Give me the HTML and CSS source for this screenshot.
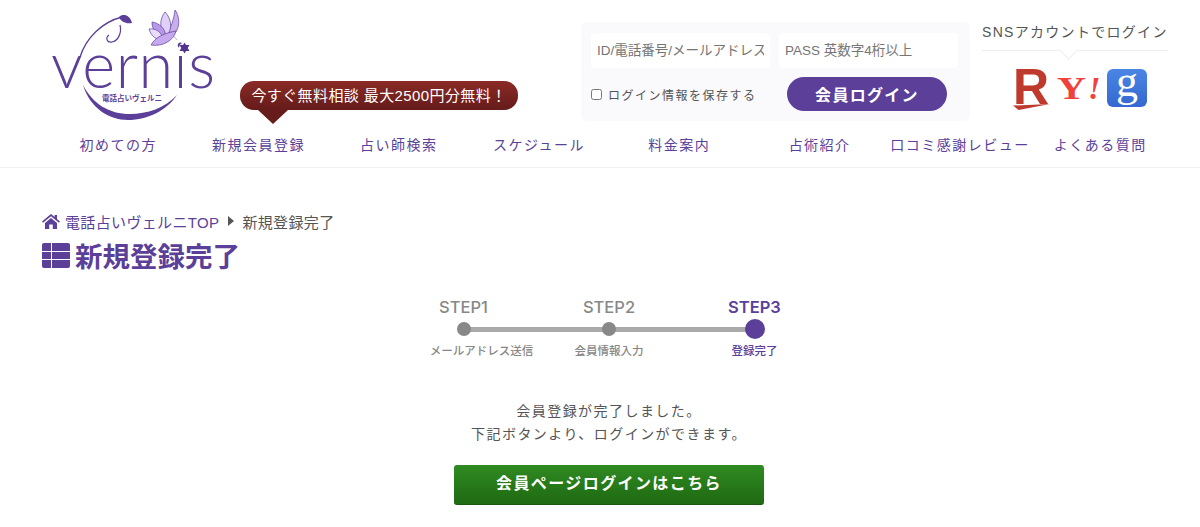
FILE: index.html
```html
<!DOCTYPE html>
<html lang="ja">
<head>
  <meta charset="UTF-8">
  <meta name="viewport" content="width=device-width, initial-scale=1.0">
  <title>新規登録完了 | 電話占いヴェルニ</title>
  <link rel="stylesheet" href="styles.css">
</head>
<body>
  <header class="site-header">
    <div class="header-top">
      <a class="logo" href="#">
        <svg width="174" height="116" viewBox="46 8 174 116">
          <!-- vine -->
          <path d="M80 57C86 38 102 22 122 17" fill="none" stroke="#5b3f99" stroke-width="1.3"/>
          <path d="M120 25C122 33 118 41 112 42C107 43 105 38 109 35" fill="none" stroke="#5b3f99" stroke-width="1.2"/>
          <path d="M119 17C123 13 130 15 132 23C126 24 121 22 119 17Z" fill="#5b3f99"/>
          <!-- lotus -->
          <path d="M166 37C171 28 174 18 175 10C179 15 180 24 177 30C175 34 171 37 166 37Z" fill="#c9aeee" stroke="#5b3f99" stroke-width=".7"/>
          <path d="M164 36C159 28 160 18 165 12C171 18 173 28 167 36Z" fill="#e0d0f7" stroke="#5b3f99" stroke-width=".7"/>
          <path d="M165 38C157 37 152 30 152 22C159 23 167 29 165 38Z" fill="#b898e8" stroke="#5b3f99" stroke-width=".7"/>
          <path d="M163 40C156 40 151 36 149 29C156 28 162 32 163 40Z" fill="#e8dcf9" stroke="#5b3f99" stroke-width=".7"/>
          <path d="M151 45C155 37 165 33 176 31C174 40 163 47 151 45Z" fill="#c6a9ee" stroke="#5b3f99" stroke-width=".7"/>
          <path d="M172 34L177 40" stroke="#a893c9" stroke-width=".7"/>
          <text class="logo-name" x="51" y="88">vernis</text>
          <!-- star -->
          <circle cx="184.5" cy="48" r="5.5" fill="#fff"/>
          <path d="M184.5 42.5L189.5 51H179.5ZM184.5 53.5L179.5 45H189.5Z" fill="#4f3590"/>
          <path d="M83 85C90 108 109 120 128 120C148 120 167 110 177 95C165 108 147 114 130 114C109 114 93 104 83 85Z" fill="#5b3f99"/>
          <text class="logo-sub" x="132" y="101" text-anchor="middle">電話占いヴェルニ</text>
        </svg>
      </a>

      <div class="promo">今すぐ無料相談 最大2500円分無料！</div>

      <form class="login-box">
        <div class="login-row">
          <input class="login-input" type="text" placeholder="ID/電話番号/メールアドレス">
          <input class="login-input" type="password" placeholder="PASS 英数字4桁以上">
        </div>
        <div class="login-row login-row-bottom">
          <label class="remember"><input type="checkbox">ログイン情報を保存する</label>
          <button class="login-btn" type="button">会員ログイン</button>
        </div>
      </form>

      <div class="sns">
        <p class="sns-title">SNSアカウントでログイン</p>
        <div class="sns-icons">
          <a class="sns-rakuten" href="#">R</a>
          <a class="sns-yahoo" href="#"><span class="yahoo-y">Y</span><span class="yahoo-mark">!</span></a>
          <a class="sns-google" href="#">g</a>
        </div>
      </div>
    </div>

    <nav class="global-nav">
      <a href="#">初めての方</a>
      <a href="#">新規会員登録</a>
      <a href="#">占い師検索</a>
      <a href="#">スケジュール</a>
      <a href="#">料金案内</a>
      <a href="#">占術紹介</a>
      <a href="#">口コミ感謝レビュー</a>
      <a href="#">よくある質問</a>
    </nav>
  </header>

  <main class="content">
    <div class="breadcrumb">
      <svg class="icon-home" width="18" height="15" viewBox="0 0 18 15">
        <path d="M9 0L12.6 3V1H15V5L18 7.6L17 8.8L9 2.2L1 8.8L0 7.6ZM3 9L9 4L15 9V15H10.8V10.5H7.2V15H3Z" fill="#5b3f99"/>
      </svg>
      <a href="#">電話占いヴェルニTOP</a>
      <svg class="icon-caret" width="6" height="10" viewBox="0 0 6 10"><path d="M0 0L6 5L0 10Z" fill="#555"/></svg>
      <span>新規登録完了</span>
    </div>

    <h1 class="page-title">
      <svg width="28" height="25" viewBox="0 0 28 25">
        <path d="M2 0H9V8H0V2Q0 0 2 0ZM10 0H26Q28 0 28 2V8H10ZM0 9H9V16H0ZM10 9H28V16H10ZM0 17H9V25H2Q0 25 0 23ZM10 17H28V23Q28 25 26 25H10Z" fill="#5b3f99"/>
      </svg>
      新規登録完了
    </h1>

    <ol class="steps">
      <li class="step">
        <span class="step-name">STEP1</span>
        <span class="step-dot"></span>
        <span class="step-label step-label-first">メールアドレス送信</span>
      </li>
      <li class="step">
        <span class="step-name">STEP2</span>
        <span class="step-dot"></span>
        <span class="step-label">会員情報入力</span>
      </li>
      <li class="step step-current">
        <span class="step-name">STEP3</span>
        <span class="step-dot"></span>
        <span class="step-label">登録完了</span>
      </li>
    </ol>

    <p class="message">会員登録が完了しました。<br>下記ボタンより、ログインができます。</p>

    <a class="member-btn" href="#">会員ページログインはこちら</a>
  </main>
</body>
</html>
```

FILE: styles.css
```css
* {
  box-sizing: border-box;
}
body {
  margin: 0;
  background-color: #ffffff;
  color: #555;
  font-family: "Liberation Sans", "Noto Sans CJK JP", sans-serif;
}
a {
  text-decoration: none;
}
p, h1, ol {
  margin: 0;
  padding: 0;
}

/* header */
.site-header {
  height: 168px;
  border-bottom: 1px solid #f1f1f6;
}
.header-top {
  display: flex;
  align-items: flex-start;
  height: 125px;
  padding-left: 46px;
}
.logo {
  display: block;
  width: 174px;
  height: 116px;
  margin-top: 8px;
}
.logo svg {
  display: block;
}
.logo-name {
  font-family: "Lato", sans-serif;
  font-weight: 300;
  font-size: 63px;
  letter-spacing: .5px;
  fill: #5b3f99;
}
.logo-sub {
  font-size: 7.5px;
  font-weight: 700;
  fill: #5b3f99;
}
.promo {
  position: relative;
  width: 278px;
  height: 29px;
  margin: 81px 0 0 20px;
  border-radius: 14px;
  background: linear-gradient(#8a2a26, #651c1a);
  color: #fff;
  font-size: 15px;
  line-height: 29px;
  letter-spacing: .4px;
  text-align: center;
  white-space: nowrap;
}
.promo::after {
  content: "";
  position: absolute;
  left: 18px;
  top: 29px;
  border-top: 14px solid #651c1a;
  border-left: 15px solid transparent;
  border-right: 15px solid transparent;
}
.login-box {
  width: 389px;
  height: 99px;
  margin: 22px 0 0 63px;
  padding: 11px 13px 0 10px;
  border-radius: 6px;
  background-color: #fafafc;
}
.login-row {
  display: flex;
  gap: 9px;
}
.login-row-bottom {
  align-items: center;
  justify-content: space-between;
  margin-top: 9px;
  padding-right: 10px;
}
.login-input {
  width: 179px;
  height: 35px;
  padding: 0 6px;
  border: none;
  border-radius: 4px;
  background-color: #fff;
  font-family: inherit;
  font-size: 13.5px;
}
.login-input::placeholder {
  color: #757575;
}
.remember {
  display: flex;
  align-items: center;
  color: #555;
  font-size: 12px;
  letter-spacing: 1.5px;
  white-space: nowrap;
}
.remember input {
  width: 11px;
  height: 11px;
  margin: 1px 6px 0 0;
}
.login-btn {
  width: 160px;
  height: 34px;
  border: none;
  border-radius: 17px;
  background-color: #5b3f99;
  color: #fff;
  font-family: inherit;
  font-size: 16px;
  font-weight: 700;
  letter-spacing: 1.3px;
}
.sns {
  width: 186px;
  margin: 22px 0 0 12px;
}
.sns-title {
  position: relative;
  height: 29px;
  border-bottom: 1px solid #eee;
  color: #555;
  font-size: 14px;
  line-height: 20px;
  letter-spacing: 1.3px;
  white-space: nowrap;
}
.sns-title::after {
  content: "";
  position: absolute;
  left: 80px;
  top: 22px;
  width: 12px;
  height: 12px;
  background-color: #fff;
  border-right: 1px solid #eee;
  border-bottom: 1px solid #eee;
  transform: rotate(45deg);
}
.sns-icons {
  display: flex;
  align-items: flex-start;
  margin: 15px 0 0 31px;
}
.sns-rakuten {
  position: relative;
  width: 38px;
  height: 44px;
  color: #bf3a2c;
  font-size: 50px;
  font-weight: 700;
  line-height: 43px;
  overflow: hidden;
}
.sns-rakuten::after {
  content: "";
  position: absolute;
  left: 0;
  bottom: 0;
  width: 37px;
  height: 6px;
  background-color: #bf3a2c;
  clip-path: polygon(0 25%, 100% 0, 15% 100%);
}
.sns-yahoo {
  display: flex;
  width: 50px;
  margin: 7px 0 0 6px;
  color: #f0413a;
  font-family: "Liberation Serif", serif;
  font-weight: 700;
  line-height: 30px;
}
.yahoo-y {
  width: 30px;
  font-size: 32px;
  transform: scaleX(1.25);
  transform-origin: left center;
}
.yahoo-mark {
  margin-left: 1px;
  font-size: 32px;
  font-style: italic;
}
.sns-google {
  width: 40px;
  height: 38px;
  margin: 3px 0 0 0;
  border-radius: 6px;
  background: linear-gradient(#4a86e4, #3568d0);
  color: #fff;
  font-family: "Liberation Serif", serif;
  font-size: 44px;
  line-height: 25px;
  text-align: center;
}
.global-nav {
  display: grid;
  grid-template-columns: repeat(8, 140.3px);
  margin-left: 48px;
}
.global-nav a {
  color: #5b3f99;
  font-size: 14px;
  line-height: 40px;
  letter-spacing: 1.5px;
  text-align: center;
  white-space: nowrap;
}

/* main */
.content {
  padding: 43px 24px 0 42px;
}
.breadcrumb {
  display: flex;
  align-items: center;
  height: 20px;
  font-size: 15px;
  letter-spacing: .35px;
}
.breadcrumb a {
  color: #5b3f99;
  margin-left: 5px;
}
.icon-caret {
  margin: 0 8px 0 9px;
}
.page-title {
  display: flex;
  align-items: center;
  gap: 5px;
  height: 36px;
  margin-top: 6px;
  color: #5b3f99;
  font-size: 27.5px;
  font-weight: 700;
}
.steps {
  display: flex;
  justify-content: center;
  margin: 24px 0 0 0;
  list-style: none;
  background: linear-gradient(#aaa, #aaa) no-repeat center 30px / 291px 5px;
}
.step {
  display: flex;
  flex-direction: column;
  align-items: center;
  width: 145.5px;
}
.step-name {
  height: 22px;
  color: #888;
  font-family: "Inter", sans-serif;
  font-size: 16.5px;
  font-weight: 500;
  line-height: 20px;
}
.step-dot {
  width: 14px;
  height: 14px;
  margin: 3px 0;
  border-radius: 50%;
  background-color: #888;
}
.step-label {
  margin-top: 4px;
  color: #888;
  font-size: 11.5px;
  font-weight: 500;
  line-height: 16px;
  white-space: nowrap;
}
.step-label-first {
  margin-left: 36px;
}
.step-current .step-name,
.step-current .step-label {
  color: #5b3f99;
}
.step-current .step-name {
  font-weight: 600;
}
.step-current .step-dot {
  width: 20px;
  height: 20px;
  margin: 0;
  background-color: #5b3f99;
}
.message {
  margin-top: 41px;
  color: #555;
  font-size: 14px;
  line-height: 23px;
  letter-spacing: 1.45px;
  text-align: center;
}
.member-btn {
  display: block;
  width: 310px;
  height: 40px;
  margin: 19px auto 0;
  border-radius: 3px;
  background: linear-gradient(#2f8a22, #1f6a12);
  border-bottom: 1px solid #1a5a0e;
  color: #fff;
  font-size: 16px;
  font-weight: 700;
  line-height: 38px;
  letter-spacing: 1.4px;
  text-align: center;
}
```
